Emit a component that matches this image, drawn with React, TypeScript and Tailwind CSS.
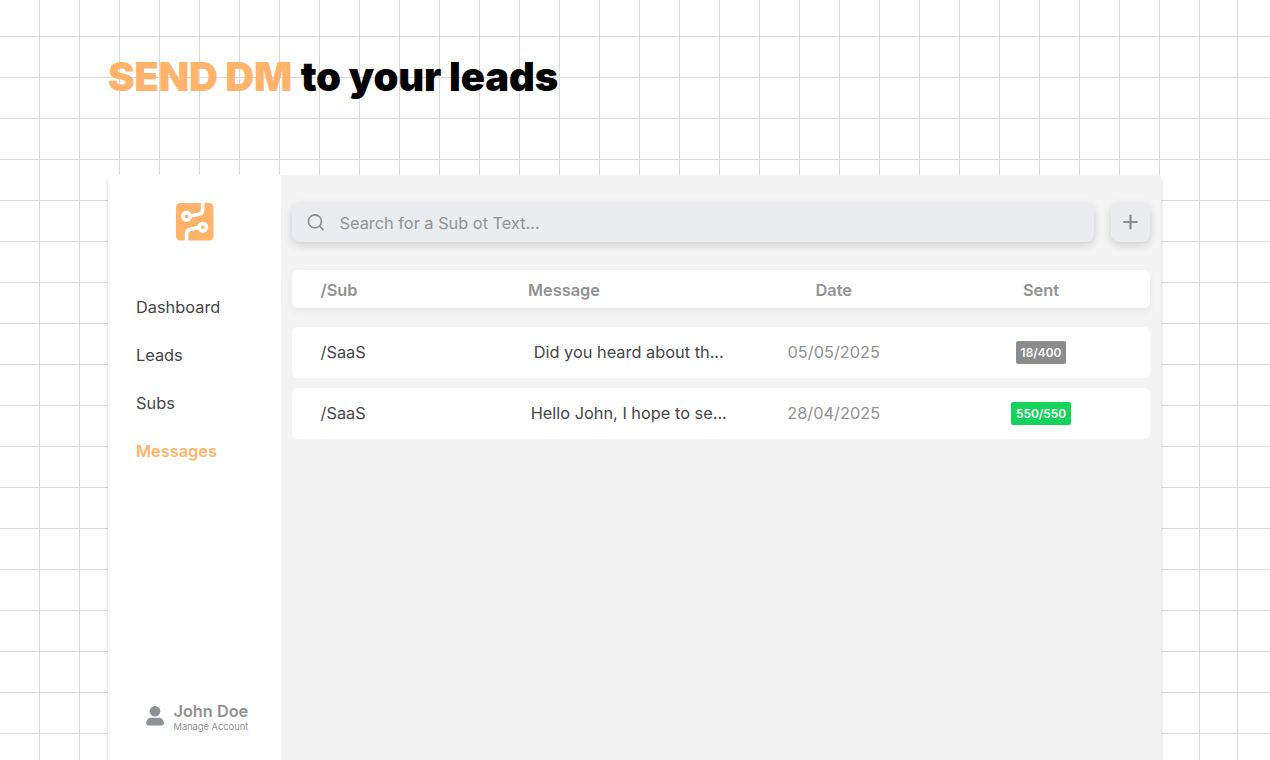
const COLUMN_LINES = [...Array.from({ length: 30 }, (_, i) => 39 + i * 40), 1237];
const ROW_LINES = Array.from({ length: 18 }, (_, i) => 36 + i * 41);

const NAV_ITEMS = ['Dashboard', 'Leads', 'Subs', 'Messages'];

const MESSAGES = [
  { sub: '/SaaS', text: 'Did you heard about th...', date: '05/05/2025', sent: '18/400', done: false },
  { sub: '/SaaS', text: 'Hello John, I hope to se...', date: '28/04/2025', sent: '550/550', done: true }
];

const COLUMNS = 'grid grid-cols-[207.5px_201.5px_208.5px_206px] items-center pl-[28.5px]';

function GridBackground() {
  return (
    <svg className="absolute inset-0" width="1270" height="760" fill="#d9d9d9">
      {COLUMN_LINES.map((x) => (
        <rect key={x} x={x} y="0" width="1" height="760" />
      ))}
      {ROW_LINES.map((y) => (
        <rect key={y} x="0" y={y} width="1270" height="1" />
      ))}
    </svg>
  );
}

function Logo() {
  return (
    <svg width="38" height="38" viewBox="0 0 38 38" fill="none">
      <rect width="37.5" height="37.5" rx="4.5" fill="#ffb36b" />
      <g stroke="#fff" strokeWidth="3.6">
        <circle cx="10.5" cy="13.3" r="3.7" />
        <path d="M14 12.9L23 11.3Q26.6 10.6 26.6 7V0" />
        <circle cx="26.8" cy="24.2" r="3.7" />
        <path d="M23.3 24.6L14.4 26.3Q10.6 27 10.6 30.8V38" />
      </g>
    </svg>
  );
}

function Sidebar() {
  return (
    <aside className="flex w-[173px] flex-col bg-white">
      <div className="mt-7 ml-[68px]">
        <Logo />
      </div>
      <nav className="mt-[54px] ml-7 flex flex-col gap-6 text-[16.35px] leading-6">
        {NAV_ITEMS.map((item) => (
          <a key={item} className={item === 'Messages' ? 'font-semibold text-[#ffb36b]' : 'text-[#464646]'}>
            {item}
          </a>
        ))}
      </nav>
      <div className="mt-auto mb-7 ml-[38px] flex items-center gap-[9.5px]">
        <svg className="-mt-px" width="18" height="20" viewBox="0 0 18 20" fill="#8e9196">
          <circle cx="9" cy="5.3" r="5.3" />
          <path d="M0.3 17.6C0.3 13.8 2.4 11.7 5.3 11.7H12.7C15.6 11.7 17.7 13.8 17.7 17.6Q17.7 19.6 15.7 19.6H2.3Q0.3 19.6 0.3 17.6Z" />
        </svg>
        <div>
          <p className="text-[16.3px] leading-5 font-semibold text-[#929292]">John Doe</p>
          <p className="text-[9.3px] leading-[11px] text-[#929292]">Manage Account</p>
        </div>
      </div>
    </aside>
  );
}

function SearchBar() {
  return (
    <div className="flex gap-[17px]">
      <div className="flex h-[39px] w-[802px] items-center rounded-lg bg-[#ebecf0] pl-[15px] shadow-[0_3px_8px_rgba(0,0,0,0.17)]">
        <svg width="17" height="17" viewBox="0 0 17 17" fill="none" stroke="#8c8c8c" strokeWidth="1.6">
          <circle cx="7.9" cy="7.4" r="6.5" />
          <path d="M12.4 12L16.5 16.2" />
        </svg>
        <span className="ml-[15.5px] pt-px text-[16.33px] leading-6 text-[#929292]">Search for a Sub ot Text...</span>
      </div>
      <button className="flex h-[39px] w-[39px] items-center justify-center rounded-lg bg-[#ebecf0] pb-px shadow-[0_3px_8px_rgba(0,0,0,0.17)]">
        <svg className="-ml-px" width="16" height="16" viewBox="0 0 16 16" stroke="#8c8c8c" strokeWidth="2.2">
          <path d="M8.5 0.8V15.2M1.3 8H15.7" />
        </svg>
      </button>
    </div>
  );
}

function MessageTable() {
  return (
    <div className="mt-7 text-[16.35px] leading-6">
      <div className={`${COLUMNS} h-[38px] rounded-md bg-white pt-0.5 font-semibold text-[#929292] shadow-[0_3px_10px_rgba(0,0,0,0.06)]`}>
        <span>/Sub</span>
        <span>Message</span>
        <span className="justify-self-center">Date</span>
        <span className="justify-self-center">Sent</span>
      </div>
      <div className="mt-[19px] flex flex-col gap-[10px]">
        {MESSAGES.map((message) => (
          <div key={message.date} className={`${COLUMNS} h-[51px] rounded-md bg-white text-[#464646]`}>
            <span className="pb-px">{message.sub}</span>
            <span className="justify-self-center pb-px whitespace-nowrap">{message.text}</span>
            <span className="justify-self-center pb-px text-[#929292]">{message.date}</span>
            <span
              className={`justify-self-center rounded-xs px-[5px] text-[11.9px] leading-[23px] font-semibold text-white ${message.done ? 'bg-[#14d35b]' : 'bg-[#8c8c8c]'}`}
            >
              {message.sent}
            </span>
          </div>
        ))}
      </div>
    </div>
  );
}

export default function App() {
  return (
    <div className="relative h-[760px] w-[1270px] overflow-hidden bg-white font-['Inter',sans-serif]">
      <GridBackground />
      <div className="relative flex h-full flex-col pl-[108px]">
        <h1 className="mt-[53px] text-[40px] leading-[48px] font-black tracking-[-0.15px] whitespace-nowrap text-black">
          <span className="mr-px tracking-[-0.3px] text-[#ffb36b]">SEND DM</span> to your leads
        </h1>
        <div className="mt-[74px] flex w-[1053px] flex-1 bg-[#f4f4f4] shadow-[0_4px_4px_rgba(0,0,0,0.2)]">
          <Sidebar />
          <main className="w-[869px] pt-7 pl-[11px]">
            <SearchBar />
            <MessageTable />
          </main>
        </div>
      </div>
    </div>
  );
}
